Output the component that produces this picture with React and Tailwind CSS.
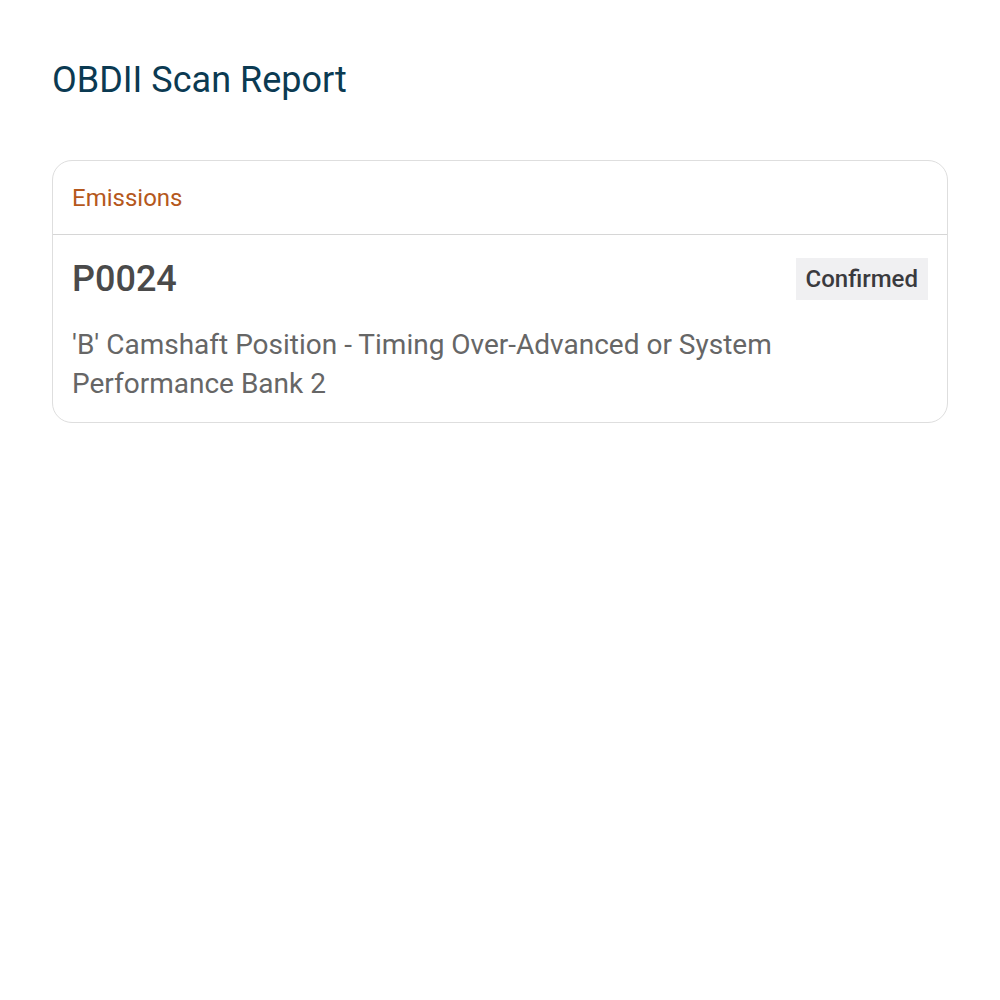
import React from 'react'

const codes = [
  {
    code: 'P0024',
    status: 'Confirmed',
    text: "'B' Camshaft Position - Timing Over-Advanced or System Performance Bank 2",
  },
]

export default function App(){
  return (
    <div className="min-h-screen bg-white px-[52px] pt-[58px] font-['Roboto',sans-serif]">
      <h1 className="text-[36px] leading-[44px] text-[#0b3a52]">OBDII Scan Report</h1>

      <div className="mt-[58px] rounded-[20px] border border-[#dedede]">
        <div className="h-[74px] flex items-center px-[19px] border-b border-[#d6d6d6]">
          <span className="text-[24px] text-[#b5581c]">Emissions</span>
        </div>
        {codes.map(c => (
          <div key={c.code} className="px-[19px] pt-[23px] pb-[19px]">
            <div className="flex items-start justify-between">
              <span className="text-[36px] leading-[42px] font-medium text-[#4a4a4a]">{c.code}</span>
              <span className="bg-[#f0f0f2] px-[10px] h-[42px] flex items-center text-[24px] font-medium text-[#3a3a3e]">{c.status}</span>
            </div>
            <p className="mt-[25px] text-[28px] leading-[39px] text-[#666666]">{c.text}</p>
          </div>
        ))}
      </div>
    </div>
  )
}
